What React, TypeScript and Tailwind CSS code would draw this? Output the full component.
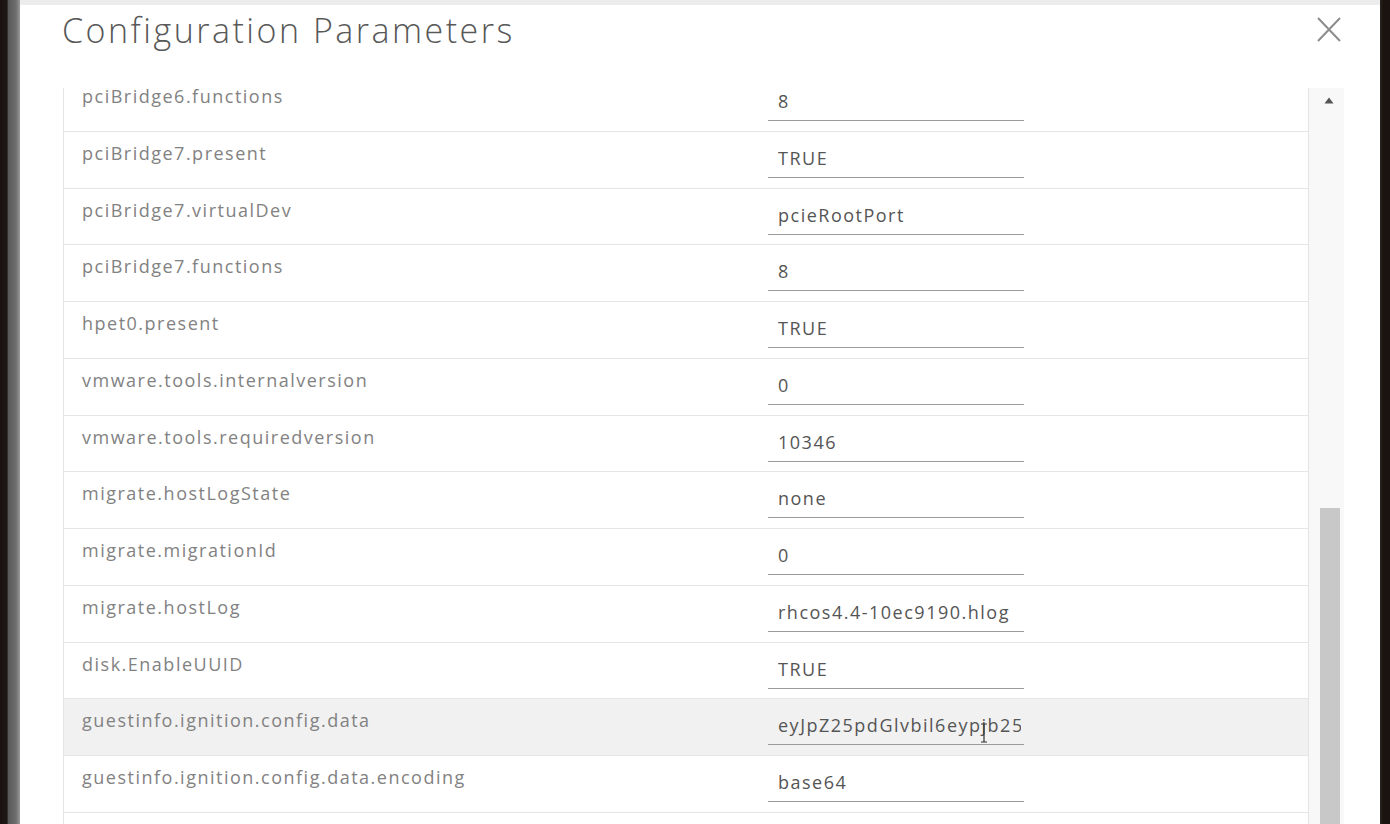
import React from "react";

const rows: { k: string; v: string; hl?: boolean; cursor?: boolean }[] = [
  { k: "pciBridge6.functions", v: "8" },
  { k: "pciBridge7.present", v: "TRUE" },
  { k: "pciBridge7.virtualDev", v: "pcieRootPort" },
  { k: "pciBridge7.functions", v: "8" },
  { k: "hpet0.present", v: "TRUE" },
  { k: "vmware.tools.internalversion", v: "0" },
  { k: "vmware.tools.requiredversion", v: "10346" },
  { k: "migrate.hostLogState", v: "none" },
  { k: "migrate.migrationId", v: "0" },
  { k: "migrate.hostLog", v: "rhcos4.4-10ec9190.hlog" },
  { k: "disk.EnableUUID", v: "TRUE" },
  { k: "guestinfo.ignition.config.data", v: "eyJpZ25pdGlvbil6eypjb25maWciOnsiYXBwZW5kIjpb", hl: true, cursor: true },
  { k: "guestinfo.ignition.config.data.encoding", v: "base64" },
  { k: "", v: "" },
];

const font = { fontFamily: '"Open Sans", "Liberation Sans", sans-serif' };

export default function App() {
  return (
    <div className="flex h-[824px] w-[1390px] overflow-hidden bg-[#1a1310]" style={font}>
      <div className="h-full w-[20px] bg-[linear-gradient(90deg,#1a1210_0%,#1d1714_35%,#585858_42%,#6e6e6e_80%,#9a9a9a_100%)]" />
      <div className="flex h-full w-[1360px] flex-col bg-white">
        <div className="h-[5px] bg-[#ececec]" />
        <div className="relative h-[83px]">
          <div className="pl-[42px] pt-[5px] text-[34px] leading-[40px] font-light tracking-[2.5px] text-[#585858]">
            Configuration Parameters
          </div>
          <svg className="absolute left-[1297px] top-[12px]" width="24" height="25" viewBox="0 0 24 25">
            <path d="M1 1 L23 24 M23 1 L1 24" stroke="#8c8c8c" strokeWidth="2" fill="none" />
          </svg>
        </div>
        <div className="flex min-h-0 flex-1">
          <div className="ml-[43px] w-[1246px] overflow-hidden border-l border-r border-[#e4e4e4]">
            <div className="mt-[-13px]">
              {rows.map((r, i) => (
                <div
                  key={i}
                  className={`relative flex h-[56.75px] border-b border-[#e6e6e6] ${r.hl ? "bg-[#f1f1f1]" : "bg-white"}`}
                >
                  <div className="w-[704px] pl-[18px] pt-[11px] text-[18px] leading-[20px] tracking-[1.5px] text-[#828282]">
                    {r.k}
                  </div>
                  <div className="mt-[12px] h-[34px] w-[256px] overflow-hidden whitespace-nowrap border-b border-[#9a9a9a] pl-[10px] pr-[3px] pt-[2px] text-[18px] leading-[24px] tracking-[1.5px] text-[#555555]">
                    <div className="overflow-hidden">{r.v}</div>
                  </div>
                  {r.cursor && (
                    <svg className="absolute left-[915px] top-[24px]" width="10" height="20" viewBox="0 0 10 20">
                      <path d="M2 1 H8 M5 1 V19 M2 19 H8" stroke="#333" strokeWidth="1.2" fill="none" />
                    </svg>
                  )}
                </div>
              ))}
            </div>
          </div>
          <div className="relative w-[35px] bg-[#f8f8f8]">
            <svg className="absolute left-[15px] top-[9px]" width="10" height="7" viewBox="0 0 10 7">
              <path d="M5 0.5 L9.5 6.5 H0.5 Z" fill="#555" />
            </svg>
            <div className="absolute left-[11px] top-[420px] h-[400px] w-[20px] bg-[#c8c8c8]" />
          </div>
        </div>
      </div>
      <div className="h-full w-[10px] bg-[linear-gradient(90deg,#2a2622_0%,#1a1310_30%,#1a1310_100%)]" />
    </div>
  );
}
